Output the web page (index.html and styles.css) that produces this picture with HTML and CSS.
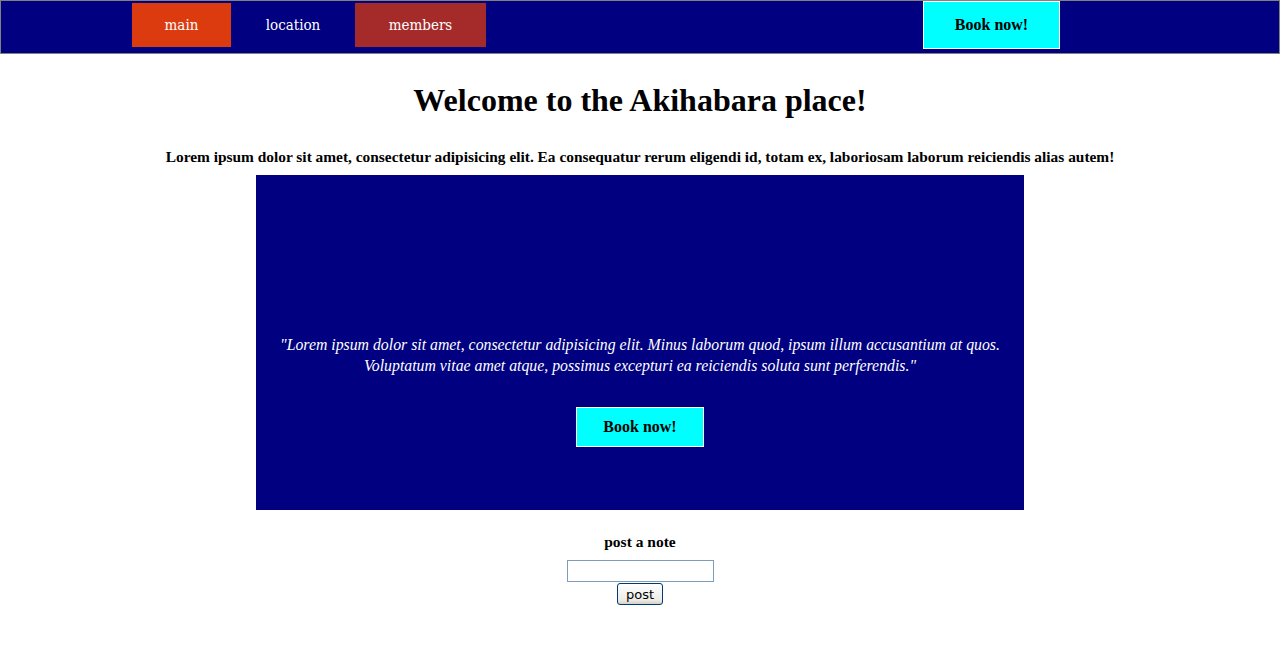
FILE: index.html
```html
<!DOCTYPE html>
<html lang="en">
<head>
<meta charset="utf-8">
<title>Akihabara place</title>
<link rel="stylesheet" href="styles.css">
</head>
<body>
<header class="header">
  <nav class="nav">
    <a class="nav-item nav-main" href="#">main</a>
    <a class="nav-item nav-location" href="#">location</a>
    <a class="nav-item nav-members" href="#">members</a>
  </nav>
  <button class="book-btn book-top">Book now!</button>
</header>
<main class="content">
  <h1 class="title">Welcome to the Akihabara place!</h1>
  <p class="intro">Lorem ipsum dolor sit amet, consectetur adipisicing elit. Ea consequatur rerum eligendi id, totam ex, laboriosam laborum reiciendis alias autem!</p>
  <section class="hero">
    <p class="quote">"Lorem ipsum dolor sit amet, consectetur adipisicing elit. Minus laborum quod, ipsum illum accusantium at quos. Voluptatum vitae amet atque, possimus excepturi ea reiciendis soluta sunt perferendis."</p>
    <button class="book-btn book-hero">Book now!</button>
  </section>
  <form class="note">
    <label class="note-label" for="note">post a note</label>
    <input class="note-input" id="note" type="text">
    <button class="note-btn" type="button">post</button>
  </form>
</main>
</body>
</html>
```
FILE: styles.css
```css
html, body {
  margin: 0;
  padding: 0;
  background: #ffffff;
  font-family: "Liberation Serif", "Times New Roman", serif;
}

.header {
  display: flex;
  align-items: flex-start;
  height: 52px;
  background: #000080;
  border: 1px solid #808080;
}

.nav {
  display: flex;
  margin-left: 131px;
  margin-top: 2px;
}

.nav-item {
  display: flex;
  align-items: center;
  justify-content: center;
  height: 44px;
  color: #ffffff;
  text-decoration: none;
  font-size: 15px;
  font-family: "DejaVu Serif Condensed", "DejaVu Serif", "Liberation Serif", serif;
  font-stretch: condensed;
  font-weight: 300;
}

.nav-main { width: 99px; background: #dc3b10; }
.nav-location { width: 124px; }
.nav-members { width: 131px; background: #a52a2a; }

.book-btn {
  box-sizing: border-box;
  background: #00ffff;
  border: 1px solid #ffffff;
  color: #000000;
  font-family: "Liberation Serif", "Times New Roman", serif;
  font-weight: bold;
  font-size: 16px;
  padding: 0;
}

.book-top {
  width: 137px;
  height: 48px;
  margin-left: 437px;
}

.content {
  text-align: center;
}

.title {
  margin: 28px 0 0;
  font-size: 32px;
  line-height: 37px;
  font-weight: bold;
}

.intro {
  margin: 29px 0 0;
  font-size: 15.4px;
  line-height: 18px;
  font-weight: bold;
}

.hero {
  box-sizing: border-box;
  width: 768px;
  height: 335px;
  margin: 9px auto 0;
  background: #000080;
  padding-top: 159px;
  display: flex;
  flex-direction: column;
  align-items: center;
}

.quote {
  margin: 0;
  color: #ffffff;
  font-style: italic;
  font-size: 15.8px;
  line-height: 21px;
}

.book-hero {
  width: 128px;
  height: 40px;
  margin-top: 31px;
}

.note {
  display: flex;
  flex-direction: column;
  align-items: center;
  margin-top: 23px;
}

.note-label {
  font-weight: bold;
  font-size: 15.5px;
  line-height: 18px;
  margin-bottom: 9px;
}

.note-input {
  box-sizing: border-box;
  width: 147px;
  height: 22px;
  border: 1px solid #7f9db9;
  margin: 0;
}

.note-btn {
  box-sizing: border-box;
  width: 46px;
  height: 22px;
  margin-top: 1px;
  border: 1px solid #003c74;
  border-radius: 3px;
  background: linear-gradient(#ffffff, #ecebe6 80%, #d6d0c5);
  font-family: "DejaVu Sans", "Liberation Sans", sans-serif;
  font-size: 13px;
  padding: 0;
  color: #000;
}
```
